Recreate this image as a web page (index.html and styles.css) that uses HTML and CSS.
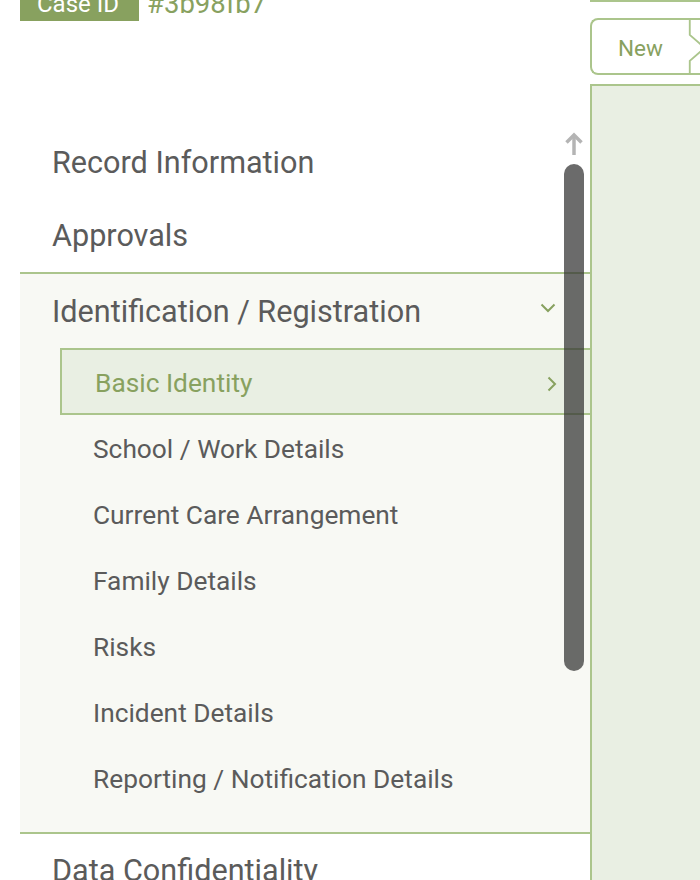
FILE: index.html
```html
<!DOCTYPE html>
<html lang="en">
<head>
<meta charset="utf-8">
<title>Case</title>
<link rel="stylesheet" href="styles.css">
</head>
<body>
<div class="page">
  <div class="left">
    <div class="header">
      <span class="badge">Case ID</span>
      <span class="case-no">#3b98fb7</span>
    </div>
    <nav class="nav">
      <div class="item">Record Information</div>
      <div class="item">Approvals</div>
      <div class="section">
        <div class="section-head">
          <span>Identification / Registration</span>
          <svg class="chev-down" width="16" height="10" viewBox="0 0 16 10"><polyline points="1.5,1.5 8,8 14.5,1.5" fill="none" stroke="#88a15f" stroke-width="2"/></svg>
        </div>
        <div class="sub active">
          <span>Basic Identity</span>
          <svg class="chev-right" width="10" height="16" viewBox="0 0 10 16"><polyline points="1.5,1.5 8,8 1.5,14.5" fill="none" stroke="#88a15f" stroke-width="2"/></svg>
        </div>
        <div class="sub">School / Work Details</div>
        <div class="sub">Current Care Arrangement</div>
        <div class="sub">Family Details</div>
        <div class="sub">Risks</div>
        <div class="sub">Incident Details</div>
        <div class="sub">Reporting / Notification Details</div>
      </div>
      <div class="item">Data Confidentiality</div>
    </nav>
    <svg class="scroll-arrow" width="20" height="24" viewBox="0 0 20 24"><line x1="10" y1="4" x2="10" y2="23" stroke="#b4b4b4" stroke-width="3.5"/><polyline points="2.5,10.5 10,3 17.5,10.5" fill="none" stroke="#b4b4b4" stroke-width="3.5"/></svg>
    <div class="scroll-thumb"></div>
  </div>
  <div class="right">
    <div class="topline"></div>
    <div class="steps">
      <div class="step">New</div>
      <svg class="step-sep" width="24" height="57" viewBox="0 0 24 57"><polyline points="1,0 1,16 17,30 1,44 1,57" fill="none" stroke="#abc58c" stroke-width="2"/></svg>
    </div>
    <div class="panel"></div>
  </div>
</div>
</body>
</html>
```

FILE: styles.css
```css
html, body {
  margin: 0;
  padding: 0;
  height: 880px;
  overflow: hidden;
  background: #ffffff;
}
body {
  font-family: Roboto, "Liberation Sans", Arial, sans-serif;
  color: #5b5b5b;
}
.page {
  display: grid;
  grid-template-columns: 570px 1fr;
  padding-left: 20px;
  width: 680px;
}
.left {
  position: relative;
}
.header {
  height: 21px;
  overflow: hidden;
  display: flex;
  align-items: flex-end;
  gap: 8px;
}
.badge {
  background: #88a15f;
  color: #ffffff;
  font-size: 24px;
  line-height: 24px;
  padding: 0 20px 5px 17px;
}
.case-no {
  color: #88a15f;
  font-size: 27.5px;
  line-height: 27px;
  padding-bottom: 4px;
}
.nav {
  margin-top: 105px;
}
.item {
  height: 73px;
  line-height: 73px;
  font-size: 30.6px;
  padding-left: 32px;
}
.section {
  background: #f8f9f4;
  border-top: 2px solid #abc58c;
  border-bottom: 2px solid #abc58c;
  padding-bottom: 21px;
}
.section-head {
  height: 74px;
  font-size: 30.6px;
  padding: 0 34px 0 32px;
  display: flex;
  align-items: center;
  justify-content: space-between;
}
.chev-down {
  margin-top: -6px;
}
.sub {
  margin-left: 40px;
  font-size: 26.3px;
  line-height: 30px;
  height: 66px;
  box-sizing: border-box;
  display: flex;
  align-items: center;
  justify-content: space-between;
  padding: 19px 31px 17px 33px;
}
.sub.active {
  height: 67px;
  background: #e9efe3;
  border: 2px solid #abc58c;
  border-right: 0;
  color: #88a15f;
  padding: 18px 33px 15px 33px;
}
.chev-right {
  margin-top: 1px;
}
.scroll-arrow {
  position: absolute;
  left: 544px;
  top: 132px;
}
.scroll-thumb {
  position: absolute;
  left: 544px;
  top: 164px;
  width: 20px;
  height: 507px;
  border-radius: 10px;
  background: rgba(50, 50, 50, 0.72);
}
.right {
  display: flex;
  flex-direction: column;
}
.topline {
  border-top: 2px solid #abc58c;
}
.steps {
  margin-top: 16px;
  height: 57px;
  display: flex;
  width: 200px;
}
.step {
  box-sizing: border-box;
  width: 98px;
  height: 57px;
  border: 2px solid #abc58c;
  border-right: 0;
  border-radius: 8px 0 0 8px;
  color: #88a15f;
  font-size: 22.5px;
  line-height: 49px;
  padding: 4px 0 0 26px;
}
.step-sep {
  flex: none;
  display: block;
  border-top: 2px solid #abc58c;
  border-bottom: 2px solid #abc58c;
  box-sizing: border-box;
}
.panel {
  margin-top: 9px;
  height: 900px;
  background: #e9efe3;
  border-top: 2px solid #abc58c;
  border-left: 2px solid #abc58c;
}
```
